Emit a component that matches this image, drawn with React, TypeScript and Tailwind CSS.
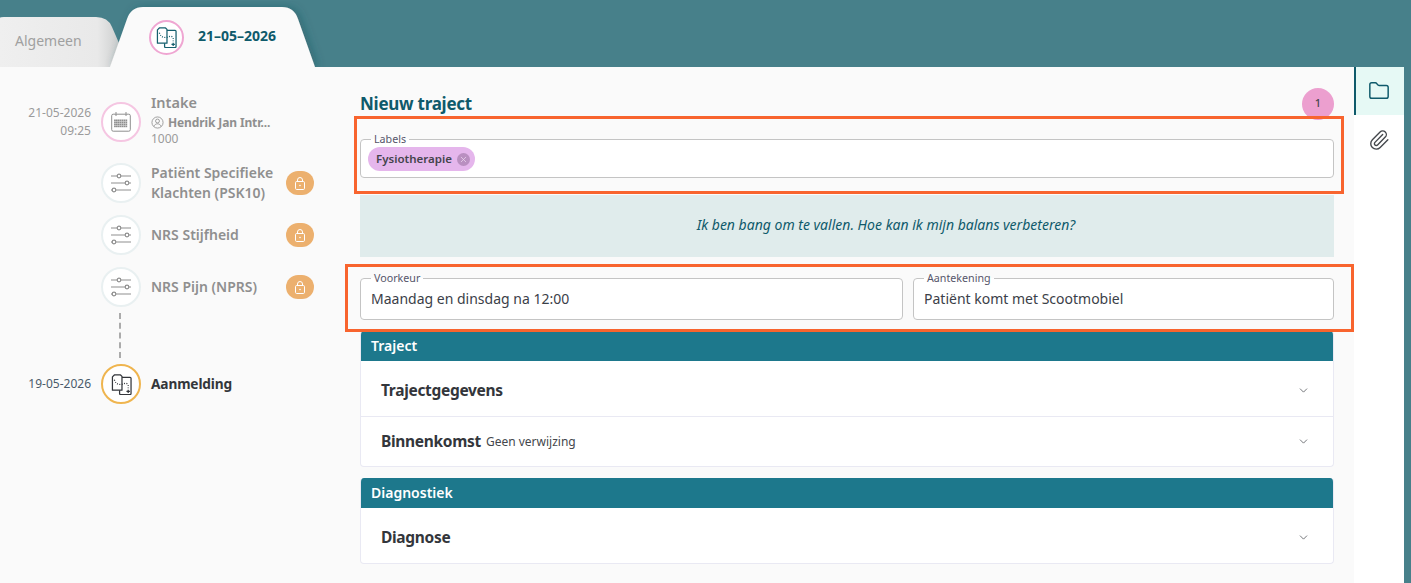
import { ChevronDown, Folder, Paperclip, X } from 'lucide-react'
import type { ReactNode } from 'react'

function RouteIcon({ className }: { className: string }) {
  return (
    <svg viewBox="0 0 22 22" fill="none" stroke="currentColor" strokeWidth="1.3" className={className}>
      <path d="M3.5 1h6.5l1.5 1.5V17H1.5V3z" strokeLinejoin="round" />
      <path d="M11.5 3.5h8.5a1 1 0 0 1 1 1v16a1 1 0 0 1-1 1H10a1 1 0 0 1-1-1V17" />
      <path d="M3.5 6c1 3 3 5 6 5s5-2 7-1 1.5 3 1.5 5" strokeDasharray="1 1.5" />
      <path d="M18 16.5v3.5M16.2 18.2h3.6" />
    </svg>
  )
}

function SlidersIcon() {
  return (
    <svg viewBox="0 0 20 20" fill="none" stroke="#8f8f8f" strokeWidth="1.2" className="h-[20px] w-[20px]">
      <path d="M0 3h6.2M9.8 3H20M0 10h14.2M17.8 10H20M4.8 17H20M0 17h1.2" />
      <circle cx="8" cy="3" r="1.8" />
      <circle cx="16" cy="10" r="1.8" />
      <circle cx="3" cy="17" r="1.8" />
    </svg>
  )
}

function CalendarIcon() {
  const dots = []
  for (let r = 0; r < 4; r++) {
    for (let c = 0; c < 7; c++) {
      dots.push(<rect key={`${r}-${c}`} x={3.6 + c * 1.9} y={8 + r * 2} width="0.7" height="0.7" fill="#a5a5a5" />)
    }
  }
  return (
    <svg viewBox="0 0 20 20" fill="none" stroke="#8f8f8f" strokeWidth="1" className="h-[20px] w-[20px]">
      <rect x="0.7" y="2.2" width="18.6" height="17" rx="1.5" />
      <path d="M5 0v4M15 0v4" />
      {dots}
    </svg>
  )
}

function UserIcon() {
  return (
    <svg viewBox="0 0 14 14" fill="none" stroke="#8f8f8f" strokeWidth="0.9" className="h-[13px] w-[13px] shrink-0">
      <circle cx="7" cy="7" r="6" />
      <circle cx="7" cy="5.4" r="2.1" />
      <path d="M3.2 11.3c.6-2 2-2.9 3.8-2.9s3.2.9 3.8 2.9" />
    </svg>
  )
}

function LockIcon() {
  return (
    <svg viewBox="0 0 10 13" fill="none" stroke="white" strokeWidth="1" className="h-[13px] w-[10px]">
      <rect x="0.5" y="4.5" width="9" height="8" rx="1.2" />
      <path d="M2.5 4.5V3a2.5 2.5 0 0 1 5 0v1.5" />
      <circle cx="5" cy="8.5" r="0.8" fill="white" stroke="none" />
    </svg>
  )
}

function LockBadge() {
  return (
    <div className="flex h-6 w-7 shrink-0 items-center justify-center rounded-full bg-[#ecb06e]">
      <LockIcon />
    </div>
  )
}

function SurveyRow({ title }: { title: ReactNode }) {
  return (
    <div className="flex h-[52px] items-center">
      <div className="ml-[101px] flex h-10 w-10 shrink-0 items-center justify-center rounded-full border-2 border-[#e9f0f1] bg-white">
        <SlidersIcon />
      </div>
      <div className="ml-[10px] w-[135px] text-[14px] leading-[20px] font-semibold text-[#8f8f8f]">{title}</div>
      <LockBadge />
    </div>
  )
}

function Field({ label, value, className }: { label: string; value: string; className: string }) {
  return (
    <fieldset className={`h-[47px] rounded border border-[#c4c4c4] bg-white px-[10px] ${className}`}>
      <legend className="px-[3px] text-[10.7px] leading-[10px] text-[#55556a]">{label}</legend>
      <div className="mt-[6px] text-[14px] leading-[20px] text-[#3b4048]">{value}</div>
    </fieldset>
  )
}

function AccordionRow({ title, note, tall }: { title: string; note?: string; tall?: boolean }) {
  return (
    <div className={`flex items-center pr-[23px] pl-[20px] ${tall ? 'h-[55px] pt-[4px]' : 'h-[49px]'}`}>
      <span className="text-[15.5px] font-bold tracking-[-0.02em] text-[#33363b]">{title}</span>
      {note && <span className="ml-[5px] text-[12px] text-[#44474c]">{note}</span>}
      <ChevronDown size={13} strokeWidth={1.5} className="ml-auto text-[#55585c]" />
    </div>
  )
}

function Section({ title, className, children }: { title: string; className: string; children: ReactNode }) {
  return (
    <section className={`overflow-hidden rounded border border-t-0 border-[#e9e9f3] bg-white ${className}`}>
      <div className="-mx-px h-[30px] bg-[#1d788c] px-[11px] text-[14px] leading-[29px] font-semibold text-white">{title}</div>
      {children}
    </section>
  )
}

export default function App() {
  return (
    <div className="relative flex h-[583px] w-[1411px] flex-col overflow-hidden bg-[#47808a] font-['Noto_Sans',sans-serif]">
      <header className="relative h-[67px] shrink-0">
        <svg viewBox="0 0 1411 67" className="absolute inset-0 h-[67px] w-[1411px]">
          <defs>
            <linearGradient id="tabfade" x1="0" x2="1" y1="0" y2="0">
              <stop offset="0" stopColor="#efefef" />
              <stop offset="0.8" stopColor="#e9e9e9" />
              <stop offset="1" stopColor="#c9cbcb" />
            </linearGradient>
            <filter id="tabshadow" x="-10%" y="-10%" width="125%" height="120%">
              <feDropShadow dx="3" dy="0" stdDeviation="4" floodColor="#1d4f58" floodOpacity="0.4" />
            </filter>
          </defs>
          <path d="M0 18Q0 17 4 17H96Q108 17 112 27L122 50V67H0Z" fill="url(#tabfade)" />
          <path d="M110 67L127 19Q131 7 143 7H282Q294 7 298 19L315 67Z" fill="#fafafa" filter="url(#tabshadow)" />
        </svg>
        <span className="absolute top-[32px] left-[15px] text-[14px] leading-[18px] text-[#a0a0a0]">Algemeen</span>
        <div className="absolute top-[20px] left-[149px] flex h-[35px] w-[35px] items-center justify-center rounded-full border-2 border-[#efa6d2] bg-white">
          <RouteIcon className="h-[21px] w-[21px] text-[#155f6e]" />
        </div>
        <span className="absolute top-[26px] left-[198px] text-[14px] leading-[20px] font-bold text-[#0f5a6b]">21–05–2026</span>
      </header>

      <div className="flex min-h-0 flex-1 pr-[7px]">
        <aside className="w-[340px] shrink-0 bg-[#fafafa] pt-[35px]">
          <div className="flex h-[55px]">
            <div className="w-[91px] shrink-0 pt-[2px] text-right text-[12px] leading-[18px] text-[#9b9b9b]">
              21-05-2026
              <br />
              09:25
            </div>
            <div className="ml-[10px] flex h-10 w-10 shrink-0 items-center justify-center rounded-full border-2 border-[#f5c6e2] bg-white">
              <CalendarIcon />
            </div>
            <div className="ml-[10px] -mt-[10px]">
              <div className="text-[14.5px] leading-[20px] font-semibold text-[#8f8f8f]">Intake</div>
              <div className="mt-[2px] flex items-center gap-[4px] text-[12px] leading-[17px] font-bold tracking-[-0.01em] text-[#8f8f8f]">
                <UserIcon />
                Hendrik Jan Intr...
              </div>
              <div className="text-[12px] leading-[16px] text-[#9b9b9b]">1000</div>
            </div>
          </div>
          <SurveyRow
            title={
              <>
                Patiënt Specifieke
                <br />
                Klachten (PSK10)
              </>
            }
          />
          <SurveyRow title="NRS Stijfheid" />
          <SurveyRow title="NRS Pijn (NPRS)" />
          <div className="ml-[119px] h-[45px] w-0 border-l-2 border-dashed border-[#ababab]" />
          <div className="mt-[6px] flex h-10 items-center">
            <div className="w-[91px] shrink-0 text-right text-[12px] text-[#4a5a6a]">19-05-2026</div>
            <div className="ml-[10px] flex h-10 w-10 shrink-0 items-center justify-center rounded-full border-2 border-[#efb54f] bg-white">
              <RouteIcon className="h-[21px] w-[21px] text-[#33363b]" />
            </div>
            <div className="ml-[10px] text-[13.7px] font-bold tracking-[-0.01em] text-[#33363b]">Aanmelding</div>
          </div>
        </aside>

        <main className="relative min-w-0 flex-1 bg-[#fafafa] pt-[25px] pr-[20px] pl-[20px]">
          <div className="flex h-[23px] items-center justify-between">
            <h1 className="text-[17px] font-bold tracking-[-0.015em] text-[#0f5a6b]">Nieuw traject</h1>
            <div className="flex h-8 w-8 items-center justify-center rounded-full bg-[#ec9fcf] text-[11px] font-medium text-[#44444c]">1</div>
          </div>

          <fieldset className="mt-[19px] h-[44px] rounded border border-[#c4c4c4] bg-white px-[7px]">
            <legend className="ml-[3px] px-[3px] text-[10.7px] leading-[10px] text-[#55556a]">Labels</legend>
            <div className="mt-[3px] flex h-[24px] w-[107px] items-center rounded-full bg-[#e5b6ec] pr-[5px] pl-[8px] text-[11.5px] font-semibold text-[#44444c]">
              Fysiotherapie
              <span className="ml-auto flex h-[13px] w-[13px] items-center justify-center rounded-full bg-[#b98fc0]">
                <X size={9} strokeWidth={2} className="text-[#ecd6ef]" />
              </span>
            </div>
          </fieldset>

          <div className="mt-[17px] flex h-[62px] items-center justify-center bg-[#e0ecec] pb-[4px] pl-[78px] text-[14px] text-[#0f5a6b] italic">
            Ik ben bang om te vallen. Hoe kan ik mijn balans verbeteren?
          </div>

          <div className="mt-[16px] flex gap-[10px]">
            <Field label="Voorkeur" value="Maandag en dinsdag na 12:00" className="w-[543px]" />
            <Field label="Aantekening" value="Patiënt komt met Scootmobiel" className="flex-1" />
          </div>

          <Section title="Traject" className="mt-[11px]">
            <AccordionRow title="Trajectgegevens" tall />
            <div className="h-px bg-[#e9e9f3]" />
            <AccordionRow title="Binnenkomst" note="Geen verwijzing" />
          </Section>

          <Section title="Diagnostiek" className="mt-[11px]">
            <AccordionRow title="Diagnose" tall />
          </Section>
        </main>

        <nav className="w-[50px] shrink-0 bg-white">
          <div className="flex h-[48px] items-center justify-center border-l-2 border-[#0f5a6b] bg-[#e6f9f5] pr-[2px]">
            <Folder size={22} strokeWidth={1.6} className="text-[#0f5a6b]" />
          </div>
          <div className="flex h-[50px] items-center justify-center">
            <Paperclip size={22} strokeWidth={1.5} className="text-[#44474c]" />
          </div>
        </nav>
      </div>

      <div className="absolute top-[116px] left-[354px] h-[78px] w-[990px] border-[3px] border-[#f8642e]" />
      <div className="absolute top-[264px] left-[345px] h-[68px] w-[1009px] border-[3px] border-[#f8642e]" />
    </div>
  )
}
